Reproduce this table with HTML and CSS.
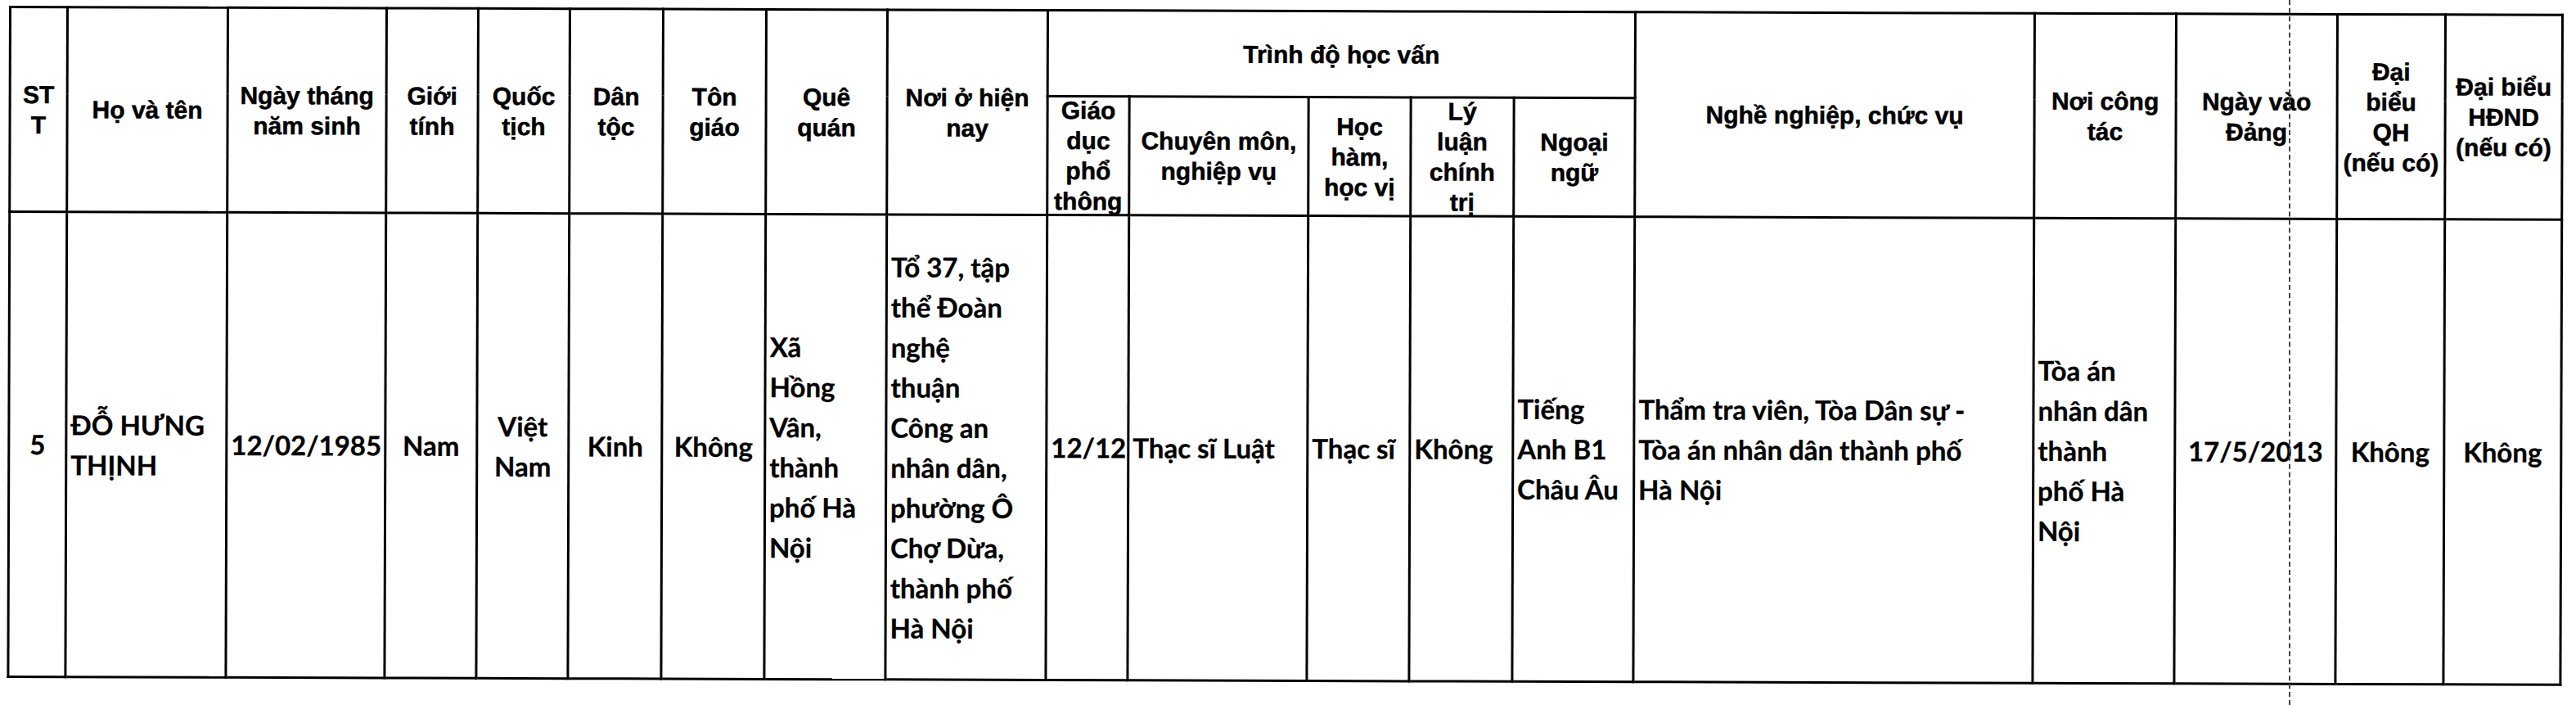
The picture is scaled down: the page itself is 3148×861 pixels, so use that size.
FILE: index.html
```html
<!DOCTYPE html>
<html lang="vi">
<head>
<meta charset="utf-8">
<title>Danh sách</title>
<link rel="stylesheet" href="styles.css">
</head>
<body>
<div class="sheet">
  <table class="roster">
    <colgroup>
      <col class="w70"><col class="w196"><col class="w194"><col class="w112"><col class="w112">
      <col class="w114"><col class="w126"><col class="w148"><col class="w196"><col class="w100">
      <col class="w219"><col class="w125"><col class="w126"><col class="w148"><col class="w488">
      <col class="w173"><col class="w197"><col class="w132"><col class="w143">
    </colgroup>
    <thead>
      <tr class="r-top">
        <th rowspan="2">ST<br>T</th>
        <th rowspan="2">Họ và tên</th>
        <th rowspan="2">Ngày tháng<br>năm sinh</th>
        <th rowspan="2">Giới<br>tính</th>
        <th rowspan="2">Quốc<br>tịch</th>
        <th rowspan="2">Dân<br>tộc</th>
        <th rowspan="2">Tôn<br>giáo</th>
        <th rowspan="2">Quê<br>quán</th>
        <th rowspan="2">Nơi ở hiện<br>nay</th>
        <th colspan="5">Trình độ học vấn</th>
        <th rowspan="2">Nghề nghiệp, chức vụ</th>
        <th rowspan="2">Nơi công<br>tác</th>
        <th rowspan="2">Ngày vào<br>Đảng</th>
        <th rowspan="2">Đại<br>biểu<br>QH<br>(nếu có)</th>
        <th rowspan="2">Đại biểu<br>HĐND<br>(nếu có)</th>
      </tr>
      <tr class="r-sub">
        <th><div class="tight">Giáo<br>dục<br>phổ<br>thông</div></th>
        <th>Chuyên môn,<br>nghiệp vụ</th>
        <th>Học<br>hàm,<br>học vị</th>
        <th><div class="tight">Lý<br>luận<br>chính<br>trị</div></th>
        <th>Ngoại<br>ngữ</th>
      </tr>
    </thead>
    <tbody>
      <tr class="r-data">
        <td class="ctr">5</td>
        <td class="lft">ĐỖ HƯNG<br>THỊNH</td>
        <td class="ctr">12/02/1985</td>
        <td class="ctr">Nam</td>
        <td class="ctr">Việt<br>Nam</td>
        <td class="ctr">Kinh</td>
        <td class="ctr">Không</td>
        <td class="lft">Xã<br>Hồng<br>Vân,<br>thành<br>phố Hà<br>Nội</td>
        <td class="lft">Tổ 37, tập<br>thể Đoàn<br>nghệ<br>thuận<br>Công an<br>nhân dân,<br>phường Ô<br>Chợ Dừa,<br>thành phố<br>Hà Nội</td>
        <td class="ctr">12/12</td>
        <td class="lft">Thạc sĩ Luật</td>
        <td class="lft">Thạc sĩ</td>
        <td class="lft">Không</td>
        <td class="lft">Tiếng<br>Anh B1<br>Châu Âu</td>
        <td class="lft">Thẩm tra viên, Tòa Dân sự -<br>Tòa án nhân dân thành phố<br>Hà Nội</td>
        <td class="lft">Tòa án<br>nhân dân<br>thành<br>phố Hà<br>Nội</td>
        <td class="ctr">17/5/2013</td>
        <td class="ctr">Không</td>
        <td class="ctr">Không</td>
      </tr>
    </tbody>
  </table>
  <div class="fold"></div>
</div>
</body>
</html>
```

FILE: styles.css
```css
html, body {
  margin: 0;
  padding: 0;
  background: #ffffff;
}

.sheet {
  position: relative;
  width: 3148px;
  height: 861px;
  padding: 7px 0 0 11px;
  box-sizing: border-box;
  overflow: hidden;
  color: #000;
}

.roster {
  border-collapse: collapse;
  table-layout: fixed;
  width: 3122px;
  transform: rotate(0.18deg);
  transform-origin: 0 0;
}

.w70 { width: 70px; }
.w100 { width: 100px; }
.w112 { width: 112px; }
.w114 { width: 114px; }
.w125 { width: 125px; }
.w126 { width: 126px; }
.w132 { width: 132px; }
.w143 { width: 143px; }
.w148 { width: 148px; }
.w173 { width: 173px; }
.w194 { width: 194px; }
.w196 { width: 196px; }
.w197 { width: 197px; }
.w219 { width: 219px; }
.w488 { width: 488px; }

.roster th,
.roster td {
  border: 3px solid #000;
  padding: 0 4px;
  overflow: visible;
}

.roster th {
  font-family: "Liberation Sans", Arial, sans-serif;
  font-weight: 700;
  font-size: 30px;
  line-height: 37px;
  text-align: center;
  vertical-align: middle;
  white-space: nowrap;
  -webkit-text-stroke: 0.5px #000;
}

.r-top { height: 105px; }
.r-sub { height: 145px; }
.r-data { height: 568px; }

.tight {
  height: 138px;
  display: flex;
  flex-direction: column;
  justify-content: center;
}

.roster td {
  font-family: Lato, "Open Sans", sans-serif;
  font-weight: 700;
  font-size: 33px;
  line-height: 49px;
  vertical-align: middle;
  white-space: nowrap;
  -webkit-text-stroke: 0.3px #000;
}

.ctr { text-align: center; }
.lft { text-align: left; }

.fold {
  position: absolute;
  left: 2797px;
  top: 0;
  height: 861px;
  border-left: 2px dashed #444;
}
```
